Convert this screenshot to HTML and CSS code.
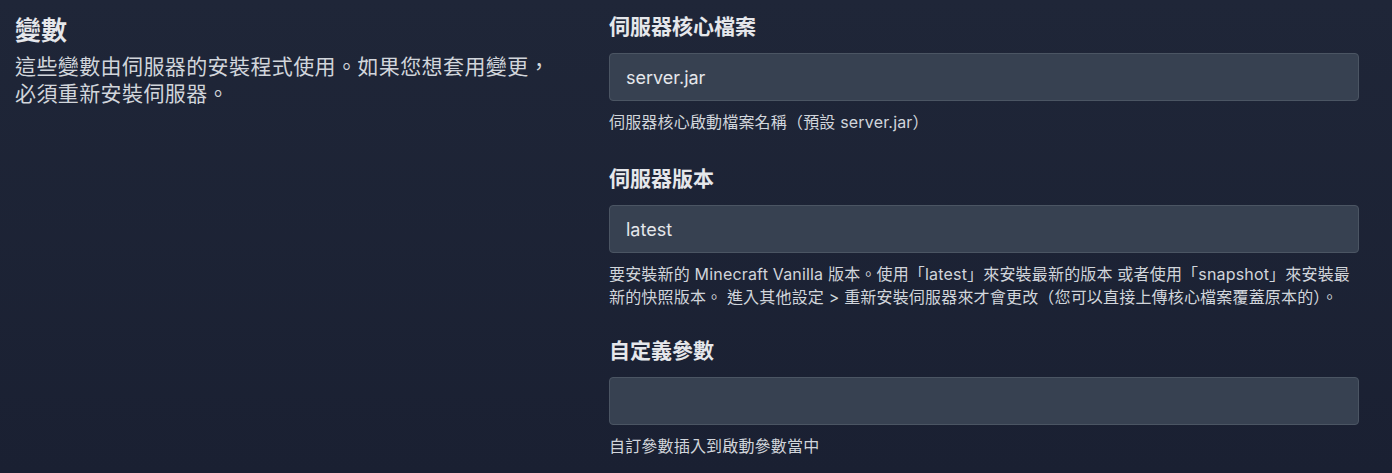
FILE: index.html
```html
<!DOCTYPE html>
<html lang="zh-Hant">
<head>
    <meta charset="UTF-8">
    <title>變數</title>
    <link rel="stylesheet" href="styles.css">
</head>
<body>
    <div class="container">
        <div class="intro">
            <h2>變數</h2>
            <p class="summary">這些變數由伺服器的安裝程式使用。如果您想套用變更，必須重新安裝伺服器。</p>
        </div>

        <div class="fields">
            <div class="field">
                <label for="jar">伺服器核心檔案</label>
                <input type="text" id="jar" value="server.jar">
                <p class="help">伺服器核心啟動檔案名稱（預設 server.jar）</p>
            </div>

            <div class="field field-tall">
                <label for="version">伺服器版本</label>
                <input type="text" id="version" value="latest">
                <p class="help">要安裝新的 Minecraft Vanilla 版本。使用「latest」來安裝最新的版本 或者使用「snapshot」來安裝最新的快照版本。 進入其他設定 &gt; 重新安裝伺服器來才會更改（您可以直接上傳核心檔案覆蓋原本的）。</p>
            </div>

            <div class="field">
                <label for="args">自定義參數</label>
                <input type="text" id="args" value="">
                <p class="help">自訂參數插入到啟動參數當中</p>
            </div>
        </div>
    </div>
</body>
</html>
```

FILE: styles.css
```css
html, body {
    margin: 0;
    height: 100%;
}
body {
    background: linear-gradient(#1f2638, #1a2032);
    color: #e5e7eb;
    font-family: "Inter", "Noto Sans CJK TC", sans-serif;
}
.container {
    display: flex;
    gap: 54px;
    padding: 13px 33px 0 15px;
}
.intro {
    width: 540px;
    flex-shrink: 0;
}
.intro h2 {
    margin: 0 0 5px;
    font-size: 26px;
    line-height: 36px;
    font-weight: 700;
    color: #e5e7eb;
}
.summary {
    margin: 0;
    font-size: 21px;
    line-height: 26.5px;
    letter-spacing: 0.4px;
    color: #d1d5db;
}
.fields {
    width: 750px;
    flex-shrink: 0;
}
.field {
    margin-bottom: 31px;
}
.field-tall {
    margin-bottom: 28px;
}
label {
    display: block;
    margin-bottom: 12px;
    font-size: 21px;
    line-height: 28px;
    font-weight: 700;
    color: #e5e7eb;
}
input {
    display: block;
    width: 100%;
    height: 48px;
    padding: 0 16px;
    box-sizing: border-box;
    background-color: #374151;
    border: 1px solid #4b5563;
    border-radius: 4px;
    color: #e5e7eb;
    font-family: inherit;
    font-size: 18px;
    outline: none;
}
.help {
    margin: 10px 0 0;
    font-size: 16px;
    line-height: 23px;
    letter-spacing: 0.18px;
    color: #d1d5db;
}
```
